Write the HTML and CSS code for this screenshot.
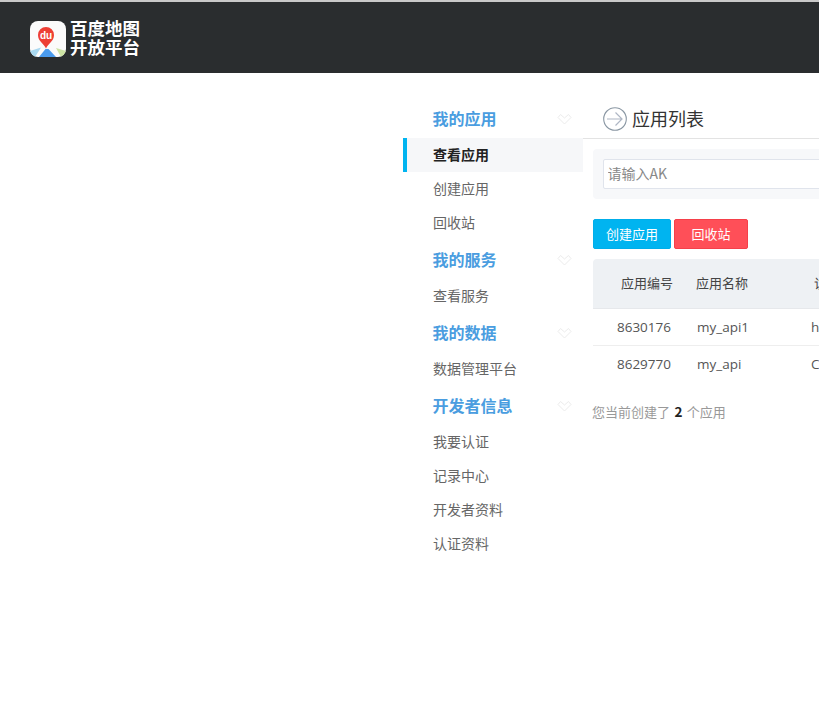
FILE: index.html
```html
<!DOCTYPE html>
<html lang="zh">
<head>
<meta charset="utf-8">
<title>应用列表</title>
<link rel="stylesheet" href="styles.css">
</head>
<body>
<header class="topbar">
  <svg class="logo-icon" width="36" height="36" viewBox="0 0 36 36">
    <defs><clipPath id="rc"><rect width="36" height="36" rx="8"/></clipPath></defs>
    <g clip-path="url(#rc)">
      <rect width="36" height="36" fill="#fbfbfb"/>
      <path d="M0 36V30L11 26.500L5 36Z" fill="#a9d8f0"/>
      <path d="M36 36V30L26 27L31 36Z" fill="#cde3a4"/>
      <path d="M15.500 28L9 36H26L18.500 28Z" fill="#4a9bee"/>
    </g>
    <path d="M16 27.500C14 22.500 8 20.500 8 14a8 8 0 0 1 16 0C24 20.500 18 22.500 16 27.500Z" fill="#ee3f35"/>
    <text x="16" y="17.500" class="logo-du" text-anchor="middle">du</text>
  </svg>
  <div class="logo-text"><span>百度地图</span><span>开放平台</span></div>
</header>
<div class="layout">
  <nav class="sidebar">
    <div class="nav-title"><span>我的应用</span><svg class="chev" width="15" height="12" viewBox="0 0 15 12"><path d="M1 4.500L3.500 1.500L7.500 5L11.500 1.500L14 4.500L7.500 11Z" fill="none" stroke="#ececec"/></svg></div>
    <a class="nav-item active">查看应用</a>
    <a class="nav-item">创建应用</a>
    <a class="nav-item">回收站</a>
    <div class="nav-title"><span>我的服务</span><svg class="chev" width="15" height="12" viewBox="0 0 15 12"><path d="M1 4.500L3.500 1.500L7.500 5L11.500 1.500L14 4.500L7.500 11Z" fill="none" stroke="#ececec"/></svg></div>
    <a class="nav-item">查看服务</a>
    <div class="nav-title"><span>我的数据</span><svg class="chev" width="15" height="12" viewBox="0 0 15 12"><path d="M1 4.500L3.500 1.500L7.500 5L11.500 1.500L14 4.500L7.500 11Z" fill="none" stroke="#ececec"/></svg></div>
    <a class="nav-item">数据管理平台</a>
    <div class="nav-title"><span>开发者信息</span><svg class="chev" width="15" height="12" viewBox="0 0 15 12"><path d="M1 4.500L3.500 1.500L7.500 5L11.500 1.500L14 4.500L7.500 11Z" fill="none" stroke="#ececec"/></svg></div>
    <a class="nav-item">我要认证</a>
    <a class="nav-item">记录中心</a>
    <a class="nav-item">开发者资料</a>
    <a class="nav-item">认证资料</a>
  </nav>
  <main class="main">
    <h1 class="page-title">
      <svg width="24" height="24" viewBox="0 0 24 24"><circle cx="12" cy="12" r="11.300" fill="none" stroke="#8a97a3" stroke-width="1.100"/><path d="M4 12H18.500M12.500 5.500L19 12L12.500 18.500" fill="none" stroke="#aeb6c4" stroke-width="1.200"/></svg>
      <span class="title-text">应用列表</span>
    </h1>
    <div class="filter"><input class="ak-input" type="text" placeholder="请输入AK"></div>
    <div class="actions">
      <button class="btn btn-blue">创建应用</button>
      <button class="btn btn-red">回收站</button>
    </div>
    <div class="app-table">
      <div class="row head"><span class="c-id head-id">应用编号</span><span class="c-name head-name">应用名称</span><span class="c-ak head-ak">访问应用（AK）</span></div>
      <div class="row"><span class="c-id">8630176</span><span class="c-name">my_api1</span><span class="c-ak">hGk2Vn7qLx</span></div>
      <div class="row"><span class="c-id">8629770</span><span class="c-name">my_api</span><span class="c-ak">Cp9TzR4mWd</span></div>
    </div>
    <p class="summary">您当前创建了 <b>2</b> 个应用</p>
  </main>
</div>
</body>
</html>
```
FILE: styles.css
```css
* { box-sizing: border-box; }
html, body { margin: 0; height: 710px; overflow: hidden; background: #fff; }
body { font-family: "Open Sans", "Noto Sans CJK SC", sans-serif; color: #555; }

.topbar {
  height: 73px;
  background: #2a2d2f;
  border-top: 2px solid #c9c9c9;
  display: flex;
  align-items: center;
  gap: 4px;
  padding: 0 0 0 30px;
}
.logo-icon { margin-top: 2px; flex: none; }
.logo-du { font: 700 10px "Liberation Sans", sans-serif; fill: #fff; }
.logo-text {
  display: flex;
  flex-direction: column;
  color: #fff;
  font: 700 17.500px/19px "Noto Sans CJK SC", sans-serif;
  margin-top: -2px;
}

.layout { display: flex; padding: 26px 0 0 403px; width: 1300px; }

.sidebar { width: 180px; flex: none; }
.nav-title {
  height: 39px;
  padding: 0 11px 0 29.500px;
  display: flex;
  align-items: center;
  justify-content: space-between;
  color: #4a9de0;
  font: 700 16px "Noto Sans CJK SC", sans-serif;
}
.nav-title span { margin-top: -2px; }
.chev { margin-top: 1px; }
.nav-item {
  display: block;
  height: 34px;
  padding-left: 30px;
  font: 14px/32px "Noto Sans CJK SC", sans-serif;
  color: #666;
}
.nav-item.active {
  background: #f6f7f9;
  border-left: 4px solid #00b4f0;
  padding-left: 26px;
  color: #222;
  font-weight: 700;
}

.main { flex: 1; }
.page-title {
  margin: 1px 0 0;
  height: 39px;
  border-bottom: 1px solid #e3e3e3;
  padding: 0 0 0 20px;
  display: flex;
  align-items: center;
  gap: 5px;
  font: 400 18px "Noto Sans CJK SC", sans-serif;
  color: #333;
}
.title-text { margin-top: -2px; }
.filter {
  margin: 10px 0 0 10px;
  height: 50px;
  padding: 10px;
  background: #f7f8fa;
  border-radius: 4px;
}
.ak-input {
  display: block;
  width: 600px;
  height: 30px;
  padding: 0 4px 2px 3.500px;
  border: 1px solid #e0e4ec;
  border-radius: 2px;
  background: #fff;
  outline: none;
  font: 14px "Noto Sans CJK SC", sans-serif;
}
.ak-input::placeholder { color: #888; opacity: 1; }

.actions { display: flex; gap: 3px; margin: 20px 0 0 10px; }
.btn {
  height: 30px;
  padding: 0 0 2px;
  border-radius: 2px;
  color: #fff;
  font: 13px "Noto Sans CJK SC", sans-serif;
}
.btn-blue { width: 78px; background: #00b4f0; border: 1px solid #00aeea; }
.btn-red { width: 74px; background: #ff4f58; border: 1px solid #f5404a; }

.app-table { margin: 10px 0 0 10px; font-size: 13.500px; }
.row {
  display: flex;
  height: 37px;
  align-items: center;
  border-bottom: 1px solid #eeeeee;
  white-space: nowrap;
}
.row:last-child { border-bottom: 0; padding-bottom: 1px; }
.row.head {
  height: 50px;
  padding-bottom: 2px;
  background: #eef1f4;
  border-bottom: 1px solid #e6e8eb;
  border-radius: 4px 4px 0 0;
  font: 13px "Noto Sans CJK SC", sans-serif;
  color: #444;
}
.c-id { width: 78px; text-align: right; flex: none; }
.c-name { width: 114px; margin-left: 26px; flex: none; }
.c-ak { flex: none; }
.head-id { width: 80px; }
.head-name { margin-left: 23px; width: 118px; }
.summary {
  margin: 18px 0 0 9px;
  font: 13px "Noto Sans CJK SC", sans-serif;
  word-spacing: 1.500px;
  color: #999;
}
.summary b { color: #222; font-size: 13.500px; }
```
